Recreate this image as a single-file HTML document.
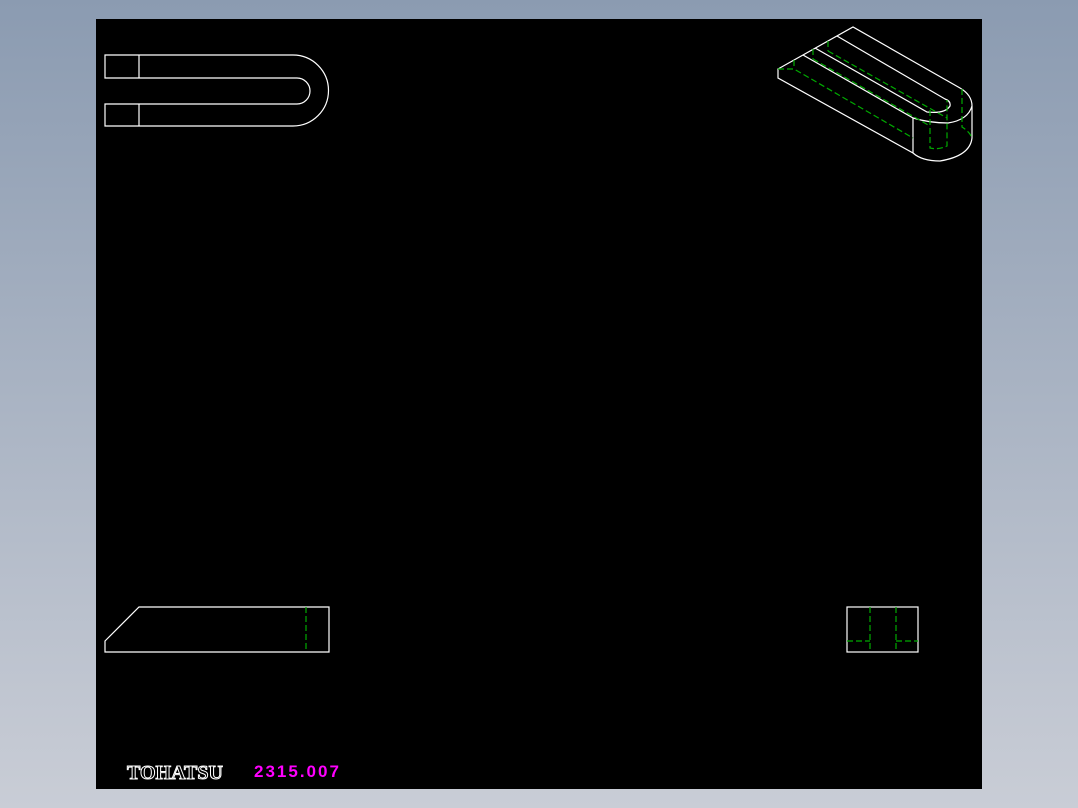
<!DOCTYPE html>
<html><head><style>
html,body{margin:0;padding:0;}
body{width:1078px;height:808px;background:linear-gradient(#8b9bb1,#c9cdd6);position:relative;overflow:hidden;font-family:"Liberation Sans",sans-serif;}
#cv{position:absolute;left:96px;top:19px;width:886px;height:770px;background:#000;}
svg{position:absolute;left:0;top:0;}
</style></head><body>
<div id="cv"></div>
<svg width="1078" height="808" viewBox="0 0 1078 808">
<g fill="none" stroke="#fff" stroke-width="1.2">
<path d="M293 55 H105 V78 H297 A13 13 0 0 1 297 104 H105 V126 H293 A35.5 35.5 0 0 0 293 55"/>
<path d="M139 55 V78 M139 104 V126"/>
<path d="M778 69 L853 27 L960 88 Q972 95 972 106 V138 Q970 156 940 161 Q922 161 913 153 L778 78 Z"/>
<path d="M803 55 L913 118 V153"/>
<path d="M913 118 Q930 123 948 123 Q968 120 972 106"/>
<path d="M815 48 L927 112 Q945 114 950 106 Q951 101 945 99 L837 36"/>
<path d="M105 641 L139 607 H329 V652 H105 Z"/>
<rect x="847" y="607" width="71" height="45"/>
</g>
<g fill="none" stroke="#0a0" stroke-width="1.2" stroke-dasharray="6,3">
<path d="M306 607 V652"/>
<path d="M870 607 V652 M896 607 V652 M847 641 H870 M896 641 H918"/>
<path d="M778 69 L794 69 L913 138 M794 60 V69 M813 49 V59 M828 41 V51 M813 59 L930 126 M828 51 L947 118 M930 110 V148 Q938 150 947 146 V100 M962 89 V127 Q970 132 972 138"/>
</g>
<text x="127" y="779" font-family="Liberation Serif,serif" font-size="20" font-weight="bold" fill="#000" stroke="#fff" stroke-width="1">TOHATSU</text>
<text x="254" y="777" font-size="17" font-weight="bold" fill="#f0f" letter-spacing="2">2315.007</text>
</svg>
</body></html>
